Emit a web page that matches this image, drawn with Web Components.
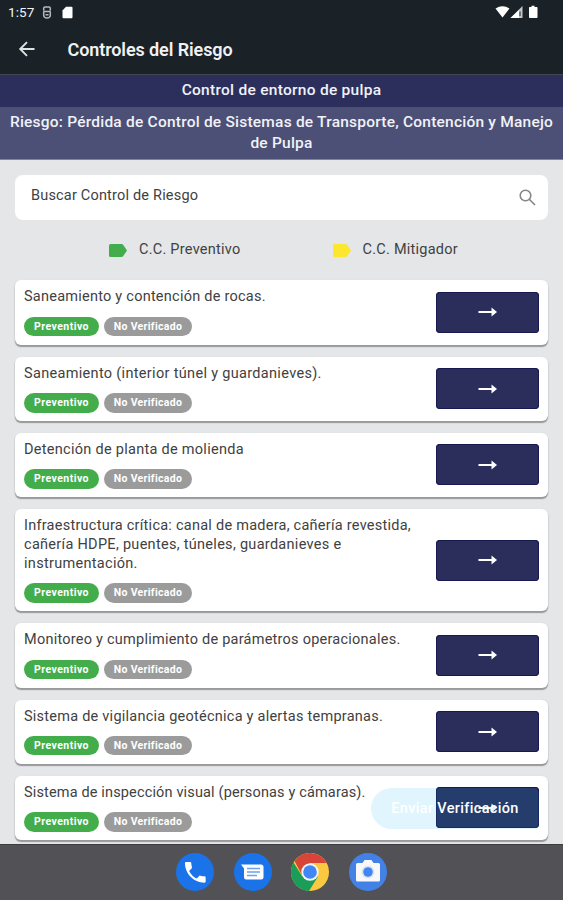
<!DOCTYPE html>
<html lang="es">
<head>
<meta charset="utf-8">
<title>Controles del Riesgo</title>
<style>
  body { margin: 0; font-family: Roboto, "Liberation Sans", sans-serif; }
</style>
</head>
<body>
<risk-app></risk-app>

<script>
function define(name, html, setup) {
    const template = document.createElement('template');
    template.innerHTML = html;

    customElements.define(name, class extends HTMLElement {
        constructor() {
            super();
            this.attachShadow({ mode: 'open' });
            this.shadowRoot.appendChild(template.content.cloneNode(true));
        }

        connectedCallback() {
            if (setup) setup(this, this.shadowRoot);
        }
    });
}

define('status-bar', `
  <style>
    :host { display: flex; align-items: center; height: 24px; padding: 0 24px 0 8px; background: #1a2228; color: #f2f4f4; font-size: 13.5px; letter-spacing: .1px; }
    .time { width: 34px; }
    .space { flex: 1; }
    svg { display: block; }
  </style>
  <span class="time">1:57</span>
  <svg width="10" height="13" viewBox="0 0 10 13" fill="none" stroke="#b4babc" stroke-width="1.5"><path d="M1.700 4.500V2.200Q1.700 1 3 1h4q1.300 0 1.300 1.200v2.300M1.200 5.500h7.600M1.700 6v3.500Q2 12 5 12t3.300-2.500V6M3.500 8.800h3"/></svg>
  <svg style="margin-left:10px" width="11" height="13" viewBox="0 0 11 13"><path d="M4 .8h5.5q1 0 1 1v9.4q0 1-1 1h-8q-1 0-1-1V4.5z" fill="#fff"/></svg>
  <span class="space"></span>
  <svg style="margin-top:-1px" width="44" height="14" viewBox="0 0 44 14">
    <path d="M.5 3.5Q7.500-1 14.500 3.500L7.500 12.500z" fill="#fff"/>
    <path d="M27.500 1v12h-12z" fill="#c4c8c9"/>
    <path d="M24 5v8h-8.500z" fill="#fff"/>
    <path d="M25 6.500v4.500" stroke="#1a2228" stroke-width="1"/>
    <path d="M36.500.7h3v1.300h2.300q.7 0 .7.700v9.500q0 .8-.8.800h-6.900q-.8 0-.8-.8V2.700q0-.7.700-.7h1.800z" fill="#fff"/>
  </svg>
`);

define('app-bar', `
  <style>
    :host { display: flex; align-items: center; box-sizing: border-box; height: 51px; padding: 2px 0 0 18px; background: #1a2228; border-bottom: 1px solid #41494d; color: #f0f1f2; }
    h1 { margin: 0 0 0 31.500px; font-size: 18px; font-weight: 600; letter-spacing: -.1px; line-height: 24px; }
    svg { display: block; margin-top: -2px; }
  </style>
  <svg width="18" height="18" viewBox="0 0 18 18" fill="none" stroke="#dfe2e3" stroke-width="1.900"><path d="M16.500 9H2.500M9 2.200L2.200 9L9 15.800"/></svg>
  <h1><slot></slot></h1>
`);

define('title-band', `
  <style>
    :host { display: block; background: #2c2f5c; color: #f1f2f8; font-size: 15.500px; font-weight: 500; text-align: center; line-height: 21px; padding: 5px 8px 6px; }
    :host([soft]) { background: #4c5076; padding: 4.500px 8px 5.500px; border-bottom: 1px solid #81849a; }
  </style>
  <slot></slot>
`);

define('search-box', `
  <style>
    :host { display: flex; align-items: center; justify-content: space-between; box-sizing: border-box; height: 45px; padding: 0 12px 0 16px; border-radius: 8px; background: #fff; color: #414141; font-size: 14.500px; letter-spacing: .19px; }
    span { margin-top: -4px; }
  </style>
  <span><slot></slot></span>
  <svg width="17" height="17" viewBox="0 0 17 17" fill="none" stroke="#858585" stroke-width="1.600"><circle cx="6.500" cy="6.500" r="5.300"/><path d="M10.500 10.500l5.500 5.500"/></svg>
`);

define('legend-item', `
  <style>
    :host { display: flex; flex: 1; align-items: center; justify-content: center; gap: 12px; color: #414141; font-size: 14.500px; letter-spacing: .25px; }
    svg { display: block; }
    span { margin-top: -2px; }
  </style>
  <svg width="18" height="13" viewBox="0 0 18 13"><path d="M1.500 0h11q1 0 1.600.8L18 6.500l-3.900 5.700q-.6.800-1.600.8h-11Q0 13 0 11.500v-10Q0 0 1.500 0z" fill="currentColor"/></svg>
  <span><slot></slot></span>
`, (host, root) => {
    root.querySelector('svg').style.color = host.getAttribute('color');
});

define('status-chip', `
  <style>
    :host { display: block; box-sizing: border-box; width: 75px; height: 19.500px; border-radius: 10px; background: #43ad4b; color: #fff; font-size: 10.500px; font-weight: 700; line-height: 19.500px; text-align: center; letter-spacing: .45px; }
    :host([muted]) { width: 88px; background: #9b9b9b; letter-spacing: .32px; }
  </style>
  <slot></slot>
`);

define('risk-card', `
  <style>
    :host { display: flex; align-items: center; justify-content: space-between; box-sizing: border-box; padding: 8.200px 9px 8.500px; border-radius: 6px; background: #fff; box-shadow: 0 2px 1px #97999b, 0 1px 2px #bbb; }
    .title { max-width: 400px; color: #414141; font-size: 14.500px; line-height: 18.850px; white-space: pre; }
    .chips { display: flex; gap: 5px; margin-top: 9.400px; }
    .go { display: flex; align-items: center; justify-content: center; width: 103px; height: 41px; border-radius: 4px; background: #2b2e5b; box-shadow: inset 0 0 0 1px #171a50; }
  </style>
  <div>
    <div class="title"><slot></slot></div>
    <div class="chips">
      <status-chip>Preventivo</status-chip>
      <status-chip muted>No Verificado</status-chip>
    </div>
  </div>
  <div class="go">
    <svg width="20" height="12" viewBox="0 0 20 12"><path d="M.5 6h14" stroke="#fff" stroke-width="2"/><path d="M13.500 1.500L19 6L13.500 10.500z" fill="#fff"/></svg>
  </div>
`);

define('send-button', `
  <style>
    :host { display: flex; align-items: center; justify-content: center; width: 168px; height: 41px; border-radius: 20.500px 6px 6px 20.500px; background: rgba(3, 169, 244, .12); color: #fff; font-size: 14.500px; font-weight: 500; letter-spacing: .33px; }
  </style>
  <span><slot></slot></span>
`);

define('dock-bar', `
  <style>
    :host { display: flex; align-items: center; justify-content: center; gap: 19.500px; box-sizing: border-box; height: 56px; border-top: 1px solid #3d3d40; background: #525256; }
    svg { display: block; width: 38px; height: 38px; margin-top: -1px; }
  </style>
  <svg viewBox="0 0 38 38"><circle cx="19" cy="19" r="19" fill="#1a73e8"/><path transform="translate(5.500 5.500) scale(1.150)" d="M6.620 10.790c1.440 2.830 3.760 5.140 6.590 6.590l2.200-2.200c.27-.27.67-.36 1.020-.24 1.120.37 2.330.57 3.570.57.55 0 1 .45 1 1V20c0 .55-.45 1-1 1-9.390 0-17-7.610-17-17 0-.55.45-1 1-1h3.500c.55 0 1 .45 1 1 0 1.250.2 2.450.57 3.570.11.35.03.74-.25 1.020z" fill="#fff"/></svg>
  <svg viewBox="0 0 38 38"><circle cx="19" cy="19" r="19" fill="#1a73e8"/><path d="M12 26.500h15q2.500 0 2.500-2.500V14q0-2.500-2.500-2.500H7l3 4V24q0 2.500 2 2.500z" fill="#fff"/><path d="M13 15.500h13M13 19h13M13 22.500h10" stroke="#6fa3ee" stroke-width="1.500"/></svg>
  <svg viewBox="0 0 38 38">
    <circle cx="19" cy="19" r="19" fill="#fbc940"/>
    <path d="M2.550 9.500A19 19 0 0 0 18 38L27 23.500L19 27L11 23z" fill="#199d58"/>
    <path d="M3.500 8L11 22L19 10H35.700A19 19 0 0 0 3.500 8z" fill="#d84437"/>
    <circle cx="19" cy="19" r="8.700" fill="#f1f3f4"/><circle cx="19" cy="19" r="6.800" fill="#4285f4"/>
  </svg>
  <svg viewBox="0 0 38 38"><circle cx="19" cy="19" r="19" fill="#4381e6"/><path d="M8.500 10h5l2-3h7l2 3h5q1.500 0 1.500 1.500V27q0 1.500-1.500 1.500h-21Q7 28.500 7 27V11.500Q7 10 8.500 10z" fill="#f8f8f8"/><circle cx="19" cy="19" r="6.500" fill="#e1e5ea"/><circle cx="19" cy="19" r="4.800" fill="#4285f4"/></svg>
`);

define('risk-app', `
  <style>
    :host { display: flex; flex-direction: column; width: 563px; height: 900px; overflow: hidden; background: #e4e6e8; position: relative; }
    main { flex: 1; min-height: 0; overflow: hidden; padding: 15px 15px 0; }
    .legend { display: flex; height: 60.300px; padding: 0 42.500px 0 49.500px; }
    .list { display: flex; flex-direction: column; gap: 11.900px; }
    send-button { position: absolute; left: 371px; top: 787.500px; }
  </style>
  <status-bar></status-bar>
  <app-bar>Controles del Riesgo</app-bar>
  <title-band><span style="letter-spacing:.28px">Control de entorno de pulpa</span></title-band>
  <title-band soft><span style="letter-spacing:.22px">Riesgo: Pérdida de Control de Sistemas de Transporte, Contención y Manejo<br>de Pulpa</span></title-band>
  <main>
    <search-box>Buscar Control de Riesgo</search-box>
    <div class="legend">
      <legend-item color="#43ad4b">C.C. Preventivo</legend-item>
      <legend-item color="#fde62f">C.C. Mitigador</legend-item>
    </div>
    <div class="list"></div>
  </main>
  <dock-bar></dock-bar>
  <send-button>Enviar Verificación</send-button>
`, (host, root) => {
    // each entry is a list of title lines: [text, letter spacing]
    const risks = [
        [['Saneamiento y contención de rocas.', .24]],
        [['Saneamiento (interior túnel y guardanieves).', .32]],
        [['Detención de planta de molienda', .28]],
        [['Infraestructura crítica: canal de madera, cañería revestida,', .25], ['cañería HDPE, puentes, túneles, guardanieves e', .29], ['instrumentación.', .3]],
        [['Monitoreo y cumplimiento de parámetros operacionales.', .24]],
        [['Sistema de vigilancia geotécnica y alertas tempranas.', .24]],
        [['Sistema de inspección visual (personas y cámaras).', .15]]
    ];
    const list = root.querySelector('.list');

    risks.forEach(lines => {
        const card = document.createElement('risk-card');
        lines.forEach(([text, spacing]) => {
            const line = document.createElement('div');
            line.textContent = text;
            line.style.letterSpacing = spacing + 'px';
            card.appendChild(line);
        });
        list.appendChild(card);
    });
});
</script>
</body>
</html>
